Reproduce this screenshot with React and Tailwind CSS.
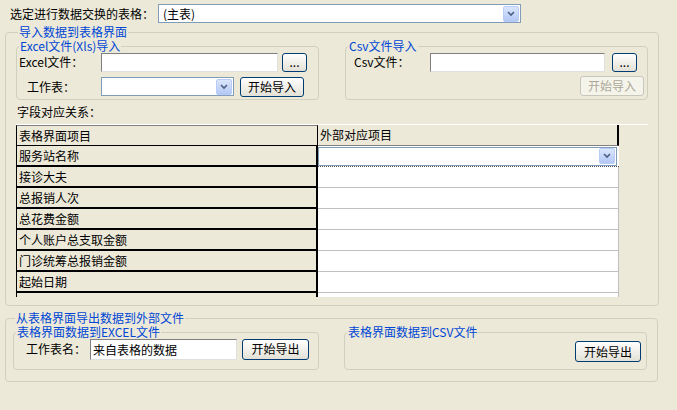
import React from 'react';

const font = { fontFamily: '"Noto Sans CJK SC", "DejaVu Sans", sans-serif' };

function Arrow() {
  return (
    <div className="w-[16px] h-[16px] bg-gradient-to-b from-[#dbe6fc] to-[#b3c8f5] border border-[#b8ccf7] rounded-[2px] flex items-center justify-center">
      <svg width="8" height="6" viewBox="0 0 8 6">
        <path d="M1 1 L4 4 L7 1" stroke="#4d6185" strokeWidth="1.6" fill="none" />
      </svg>
    </div>
  );
}

function Select({ className, value }) {
  return (
    <div className={'bg-white border border-[#7f9db9] flex items-center justify-between pl-[4px] pr-[1px] ' + className}>
      <span className="text-[12px] leading-none">{value}</span>
      <Arrow />
    </div>
  );
}

function Btn({ children, className, disabled }) {
  return (
    <div
      className={
        'flex items-center justify-center rounded-[3px] text-[12px] leading-none border ' +
        (disabled
          ? 'border-[#c9c7ba] text-[#aca899] bg-[#f5f4ea] '
          : 'border-[#003c74] bg-gradient-to-b from-white to-[#e3e1d6] ') +
        className
      }
    >
      {children}
    </div>
  );
}

function Box({ title, className, children }) {
  return (
    <fieldset className={'border border-[#d0d0bf] rounded-[4px] ' + className}>
      <legend className="text-[#0046d5] text-[12px] leading-[12px] px-[1px] ml-[2px]">{title}</legend>
      {children}
    </fieldset>
  );
}

const rows = ['服务站名称', '接诊大夫', '总报销人次', '总花费金额', '个人账户总支取金额', '门诊统筹总报销金额', '起始日期', '终止日期'];

export default function App() {
  return (
    <div className="w-[677px] h-[410px] bg-[#ece9d8] text-[12px] text-black overflow-hidden" style={font}>
      <div className="flex items-center pt-[4px] pl-[10px] h-[23px]">
        <span className="w-[148px]">选定进行数据交换的表格：</span>
        <Select className="w-[363px] h-[19px]" value="(主表)" />
      </div>

      <Box title="导入数据到表格界面" className="ml-[5px] mt-[3px] w-[653px] h-[280px] px-[10px]">
        <div className="flex justify-between">
          <Box title="Excel文件(Xls)导入" className="w-[303px] h-[60px] mt-[2px]">
            <div className="flex items-center h-[20px]">
              <span className="w-[84px] pl-[2px]">Excel文件：</span>
              <div className="w-[177px] h-[19px] bg-white border border-t-[#808080] border-l-[#808080] border-[#e0e0e0]" />
              <Btn className="w-[25px] h-[19px] ml-[4px] text-[10px]">...</Btn>
            </div>
            <div className="flex items-center h-[21px] mt-[4px]">
              <span className="w-[84px] pl-[10px]">工作表：</span>
              <Select className="w-[133px] h-[19px]" value="" />
              <Btn className="w-[64px] h-[20px] ml-[6px]">开始导入</Btn>
            </div>
          </Box>
          <Box title="Csv文件导入" className="w-[303px] h-[60px] mt-[2px]">
            <div className="flex items-center h-[20px]">
              <span className="w-[84px] pl-[8px]">Csv文件：</span>
              <div className="w-[175px] h-[19px] bg-white border border-t-[#808080] border-l-[#808080] border-[#e0e0e0]" />
              <Btn className="w-[25px] h-[19px] ml-[7px] text-[10px]">...</Btn>
            </div>
            <div className="flex justify-end pr-[3px] mt-[4px]">
              <Btn disabled className="w-[64px] h-[20px]">开始导入</Btn>
            </div>
          </Box>
        </div>
        <div className="mt-[4px] pl-[1px] h-[16px] leading-[16px]">字段对应关系：</div>
        <div className="mt-[4px] w-[632px] h-[173px] bg-[#ece9d8] overflow-hidden flex border-t border-[#ffffff]">
          <div className="w-[603px] bg-white">
            <div className="flex h-[21px] bg-[#ece9d8]">
              <div className="w-[302px] border border-black border-t-[#808080] pl-[2px] leading-[19px]">表格界面项目</div>
              <div className="w-[301px] border-b border-r-2 border-black border-b-[#808080] pl-[2px] leading-[19px]">外部对应项目</div>
            </div>
            {rows.map((r, i) => (
              <div key={r} className="flex h-[21px]">
                <div className="w-[302px] bg-[#ece9d8] border-l border-black border-b-2 border-r-2 pl-[2px] leading-[19px]">{r}</div>
                {i === 0 ? (
                  <div className="w-[301px] border-b border-dotted border-[#555] flex items-center">
                    <Select className="w-[299px] h-[19px]" value="" />
                  </div>
                ) : (
                  <div className="w-[301px] border-b border-r border-[#c0c0c0]" />
                )}
              </div>
            ))}
          </div>
        </div>
      </Box>

      <Box title="从表格界面导出数据到外部文件" className="ml-[5px] mt-[6px] w-[653px] h-[70px] pl-[7px] pr-[10px]">
        <div className="flex justify-between">
          <Box title="表格界面数据到EXCEL文件" className="w-[306px] h-[44px] mt-[2px]">
            <div className="flex items-center h-[22px]">
              <span className="w-[76px] pl-[12px]">工作表名：</span>
              <div className="w-[147px] h-[21px] bg-white border border-t-[#808080] border-l-[#808080] border-[#e0e0e0] pl-[2px] leading-[19px]">来自表格的数据</div>
              <Btn className="w-[67px] h-[21px] ml-[5px]">开始导出</Btn>
            </div>
          </Box>
          <Box title="表格界面数据到CSV文件" className="w-[303px] h-[44px] mt-[2px]">
            <div className="flex justify-end pr-[5px] mt-[3px]">
              <Btn className="w-[66px] h-[21px]">开始导出</Btn>
            </div>
          </Box>
        </div>
      </Box>
    </div>
  );
}
